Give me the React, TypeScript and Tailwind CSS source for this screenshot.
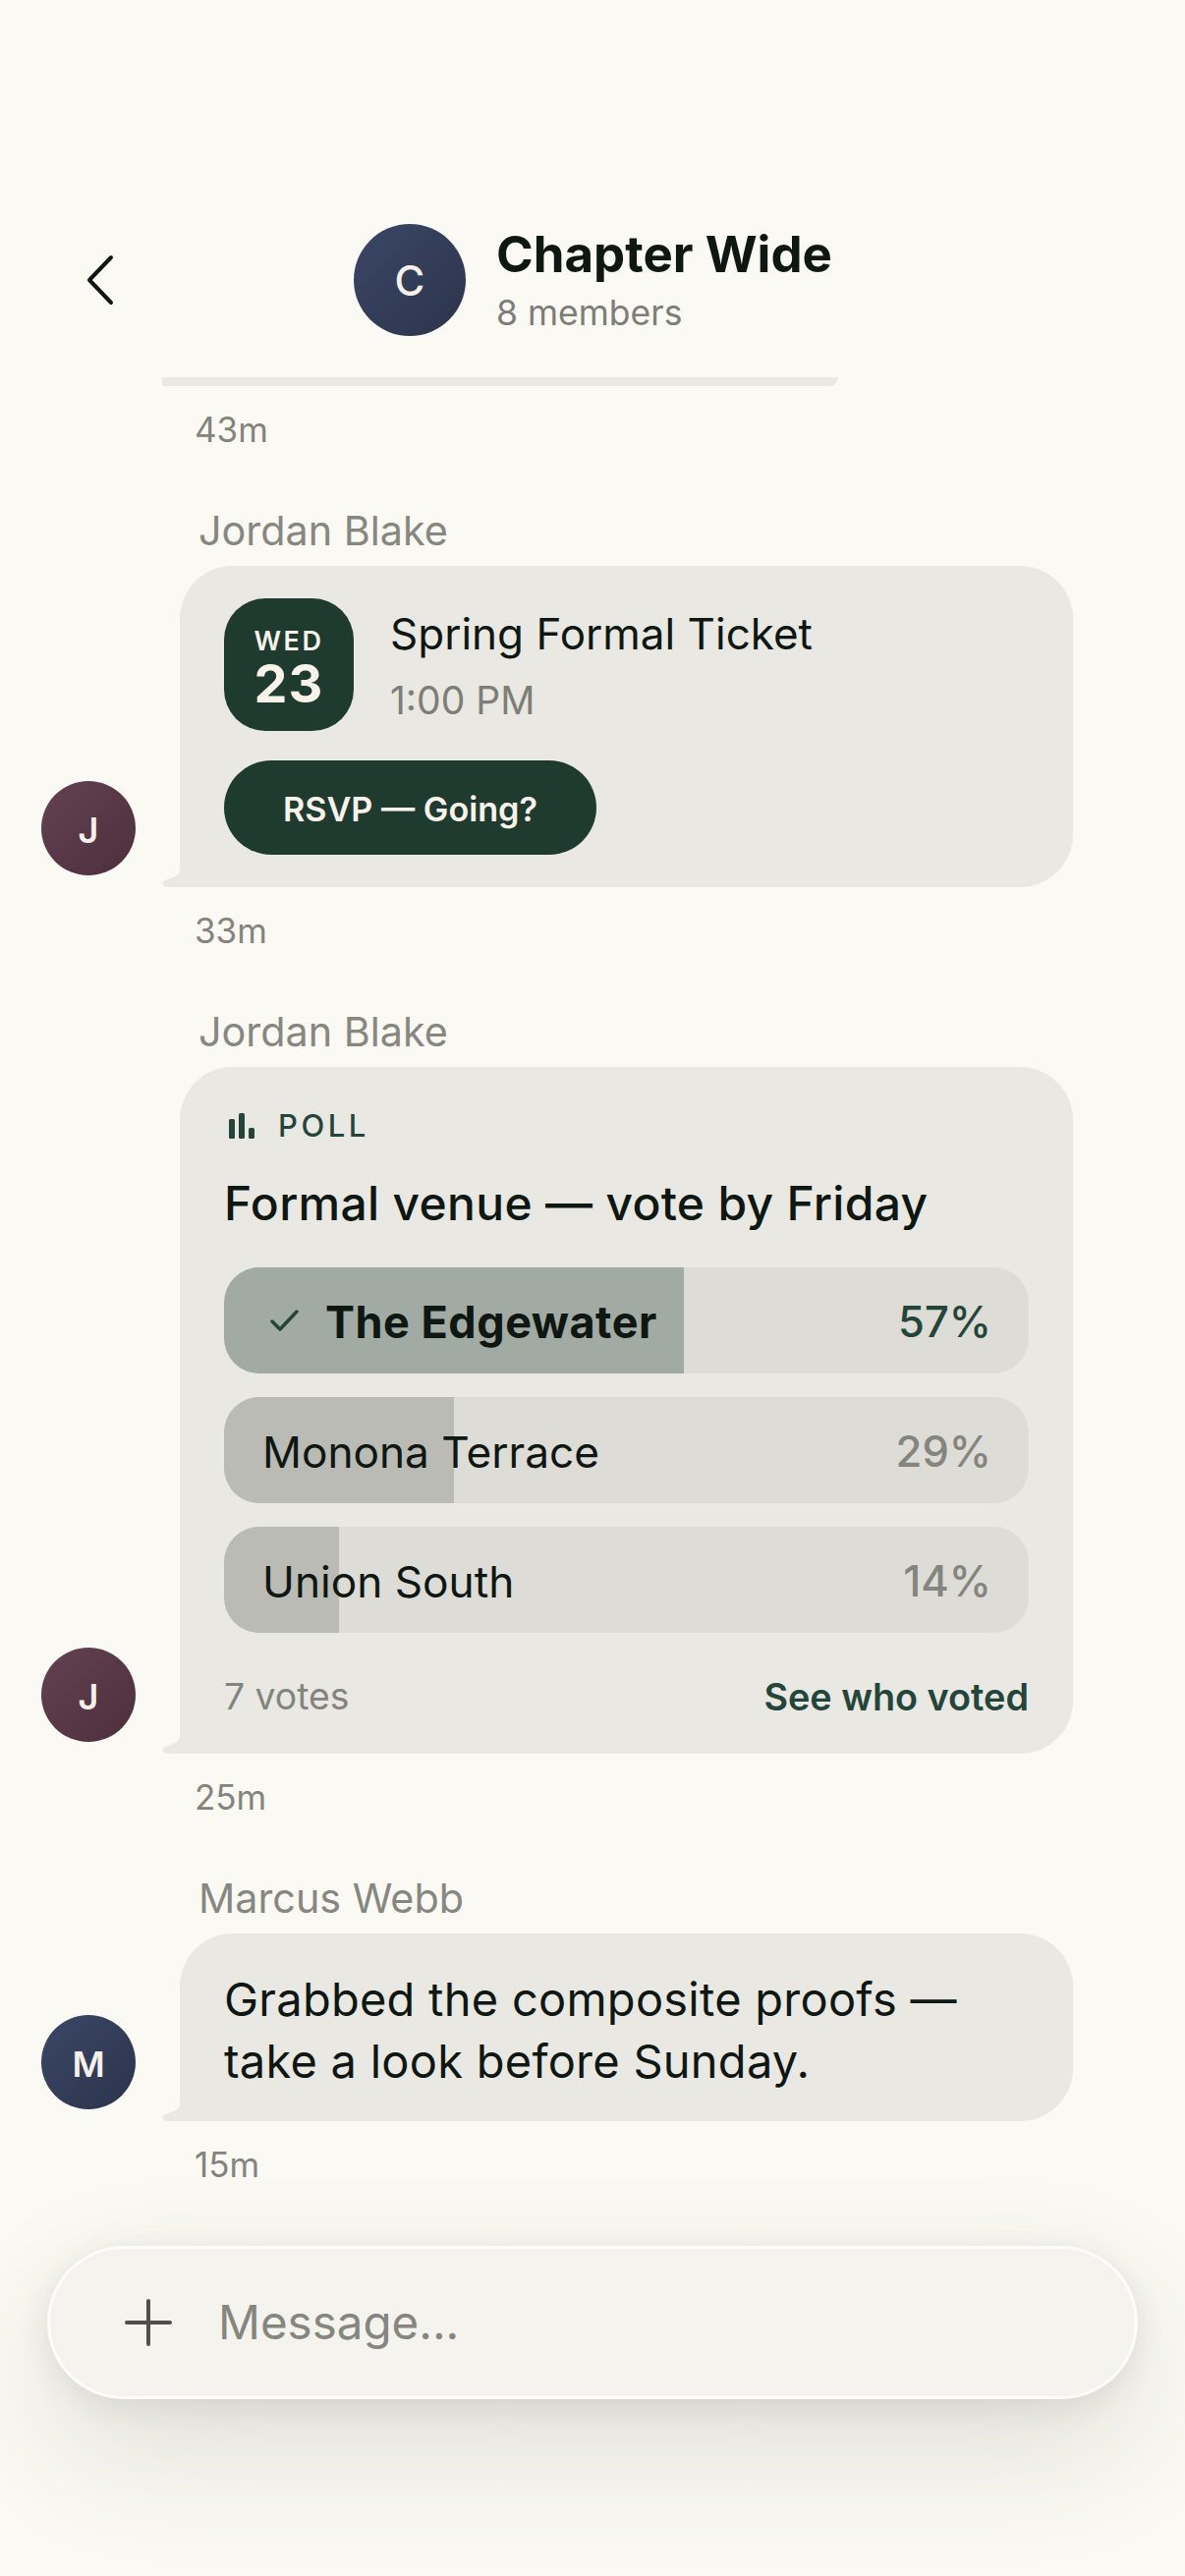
import React from "react";

function Tail() {
  return (
    <svg className="absolute left-[-18px] bottom-0" width="24" height="16" viewBox="0 0 24 16">
      <path d="M18 0 C16 5 9 7 3 9 C-1 11 0 16 7 16 L24 16 L24 0 Z" fill="#e9e8e3" />
    </svg>
  );
}

function Avatar({ letter, tone }: { letter: string; tone: "plum" | "navy" }) {
  return (
    <div
      className={
        "w-[96px] h-[96px] mb-[12px] pt-[4px] shrink-0 rounded-full flex items-center justify-center text-[36px] font-semibold text-[#f5f0e8] bg-gradient-to-br " +
        (tone === "plum" ? "from-[#634152] to-[#4d2f3c]" : "from-[#3b4767] to-[#2b344a]")
      }
    >
      {letter}
    </div>
  );
}

function Time({ children, className }: { children: string; className: string }) {
  return <div className={"pl-[198px] text-[35px] leading-[42px] text-[#83847d] " + className}>{children}</div>;
}

function Message({
  name,
  letter,
  tone,
  children,
}: {
  name: string;
  letter: string;
  tone: "plum" | "navy";
  children: React.ReactNode;
}) {
  return (
    <div className="flex items-end pl-[42px]">
      <Avatar letter={letter} tone={tone} />
      <div className="ml-[45px] w-[909px]">
        <div className="pl-[19px] mb-[12px] text-[41.3px] leading-[48px] text-[#86877f]">{name}</div>
        <div className="relative rounded-[54px] rounded-bl-none bg-[#e9e8e3]">
          <Tail />
          {children}
        </div>
      </div>
    </div>
  );
}

function PollRow({
  label,
  pct,
  fillWidth,
  fill,
  selected,
}: {
  label: string;
  pct: number;
  fillWidth: number;
  fill: string;
  selected?: boolean;
}) {
  return (
    <div className="relative h-[108px] rounded-[36px] overflow-hidden bg-[#dddcd7]">
      <div className={"absolute inset-y-0 left-0 " + fill} style={{ width: fillWidth }} />
      <div className="relative h-full flex items-center justify-between pt-[4px] pl-[39px] pr-[38px]">
        <div className="flex items-center">
          {selected && (
            <svg className="mr-[27px] ml-[8px] -mt-[4px]" width="29" height="22" viewBox="0 0 29 22" fill="none">
              <path d="M2 12 L10 20 L27 2" stroke="#24453a" strokeWidth="3.5" strokeLinecap="round" strokeLinejoin="round" />
            </svg>
          )}
          <span className={"text-[#0f1712] " + (selected ? "text-[45px] font-bold tracking-[0.5px]" : "text-[44.2px]")}>{label}</span>
        </div>
        <span className={"text-[43.5px] font-medium " + (selected ? "text-[#24453a]" : "text-[#84857e]")}>{pct}%</span>
      </div>
    </div>
  );
}

export default function App() {
  return (
    <div
      className="w-[1206px] h-[2622px] overflow-hidden bg-[#fbf9f3] text-[#0f1712]"
      style={{ fontFamily: "Inter, 'Liberation Sans', sans-serif" }}
    >
      {/* Header */}
      <div className="pt-[228px] h-[384px]">
        <div className="flex items-center pl-[84px]">
          <svg width="36" height="52" viewBox="0 0 36 52" fill="none">
            <path d="M29 3 L7 26 L29 49" stroke="#0f1712" strokeWidth="4" strokeLinecap="round" strokeLinejoin="round" />
          </svg>
          <div className="ml-[240px] w-[114px] h-[114px] rounded-full bg-gradient-to-br from-[#3b4767] to-[#2b344a] flex items-center justify-center text-[42px] font-medium text-[#f5f0e8]">
            C
          </div>
          <div className="ml-[31px]">
            <div className="text-[51px] leading-[62px] font-bold">Chapter Wide</div>
            <div className="mt-[6px] text-[35.5px] leading-[46px] text-[#7d7e77]">8 members</div>
          </div>
        </div>
      </div>

      {/* Clipped earlier message */}
      <div className="ml-[165px] w-[688px] h-[9px] bg-[#e9e8e3] rounded-bl-[9px] rounded-br-[30px]" />
      <Time className="mt-[23px]">43m</Time>

      <div className="mt-[58px]">
        <Message name="Jordan Blake" letter="J" tone="plum">
          <div className="pt-[33px] pl-[45px] pb-[33px]">
            <div className="flex items-center">
              <div className="w-[132px] h-[135px] pt-[6px] rounded-[42px] bg-[#1f3a2f] flex flex-col items-center justify-center text-[#f7f3ea]">
                <div className="text-[27px] leading-[32px] font-semibold tracking-[2.5px]">WED</div>
                <div className="text-[54px] leading-[54px] font-bold tracking-[1px]">23</div>
              </div>
              <div className="ml-[37px]">
                <div className="text-[44px] leading-[58px]">Spring Formal Ticket</div>
                <div className="mt-[14px] text-[39px] leading-[50px] text-[#7d7e77]">1:00 PM</div>
              </div>
            </div>
            <div className="mt-[30px] w-[379px] h-[96px] pt-[3px] rounded-full bg-[#1f3a2f] flex items-center justify-center text-[34.2px] font-semibold text-[#f7f3ea]">
              RSVP — Going?
            </div>
          </div>
        </Message>
      </div>
      <Time className="mt-[23px]">33m</Time>

      <div className="mt-[58px]">
        <Message name="Jordan Blake" letter="J" tone="plum">
          <div className="pt-[42px] px-[45px] pb-[35px]">
            <div className="flex items-center h-[36px] pl-[5px]">
              <svg width="26" height="26" viewBox="0 0 26 26">
                <rect x="0" y="6" width="6" height="20" rx="1.5" fill="#24453a" />
                <rect x="10" y="0" width="6" height="26" rx="1.5" fill="#24453a" />
                <rect x="20" y="15" width="6" height="11" rx="1.5" fill="#24453a" />
              </svg>
              <span className="ml-[24px] text-[31px] font-medium tracking-[3.5px] text-[#24453a]">POLL</span>
            </div>
            <div className="mt-[30px] text-[48px] leading-[62px] font-medium tracking-[0.3px]">Formal venue — vote by Friday</div>
            <div className="mt-[34px] flex flex-col gap-[24px]">
              <PollRow label="The Edgewater" pct={57} fillWidth={468} fill="bg-[#a2aba3]" selected />
              <PollRow label="Monona Terrace" pct={29} fillWidth={234} fill="bg-[#babbb4]" />
              <PollRow label="Union South" pct={14} fillWidth={117} fill="bg-[#babbb4]" />
            </div>
            <div className="mt-[42px] flex items-center justify-between leading-[46px]">
              <span className="text-[37.3px] text-[#83847d]">7 votes</span>
              <span className="text-[37.8px] font-semibold text-[#24453a]">See who voted</span>
            </div>
          </div>
        </Message>
      </div>
      <Time className="mt-[23px]">25m</Time>

      <div className="mt-[58px]">
        <Message name="Marcus Webb" letter="M" tone="navy">
          <div className="pt-[35px] pb-[30px] px-[45px] text-[47px] leading-[63px] tracking-[0.25px]">
            Grabbed the composite proofs —<br />take a look before Sunday.
          </div>
        </Message>
      </div>
      <Time className="mt-[23px]">15m</Time>

      {/* Composer */}
      <div className="mx-[48px] mt-[62px] h-[156px] rounded-full bg-[#f5f3ed] border-[3px] border-white/70 shadow-[0_6px_30px_rgba(60,60,50,0.10),0_50px_130px_rgba(60,60,50,0.14)] flex items-center pl-[76px]">
        <svg width="48" height="48" viewBox="0 0 48 48" fill="none">
          <path d="M24 2 V46 M2 24 H46" stroke="#4f504b" strokeWidth="4" strokeLinecap="round" />
        </svg>
        <span className="ml-[47px] text-[47.5px] text-[#85867f]">Message...</span>
      </div>
    </div>
  );
}
